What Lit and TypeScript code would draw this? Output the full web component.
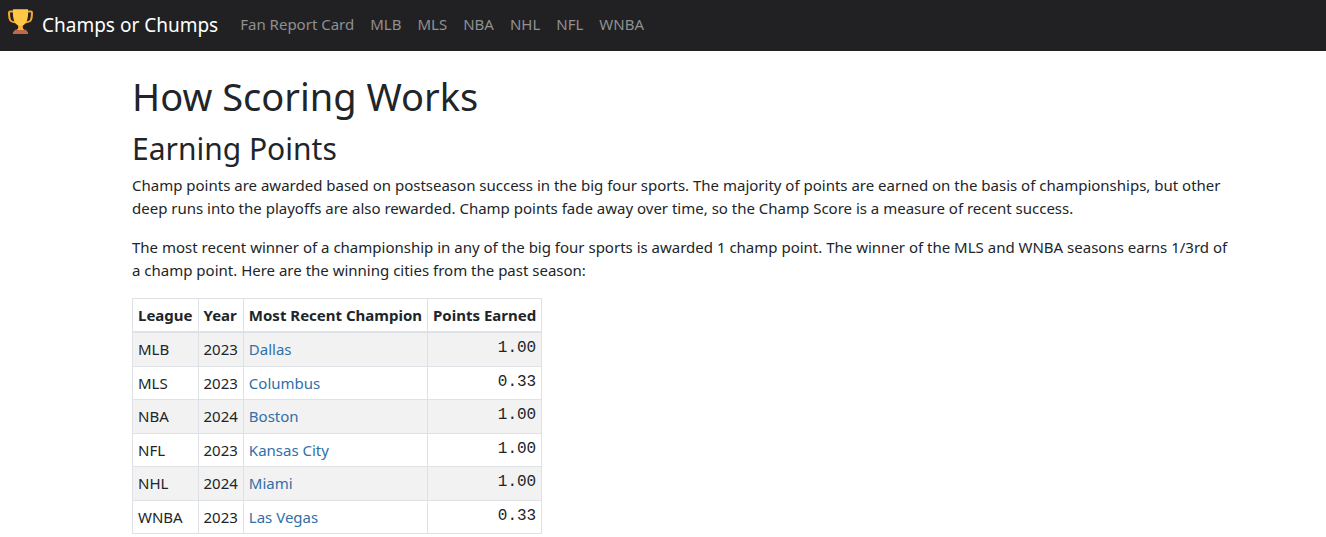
import { LitElement, html, css } from "lit";
import { customElement } from "lit/decorators.js";

interface Champion {
  league: string;
  year: number;
  city: string;
  points: number;
}

const LINKS = ["Fan Report Card", "MLB", "MLS", "NBA", "NHL", "NFL", "WNBA"];

const CHAMPIONS: Champion[] = [
  { league: "MLB", year: 2023, city: "Dallas", points: 1 },
  { league: "MLS", year: 2023, city: "Columbus", points: 0.33 },
  { league: "NBA", year: 2024, city: "Boston", points: 1 },
  { league: "NFL", year: 2023, city: "Kansas City", points: 1 },
  { league: "NHL", year: 2024, city: "Miami", points: 1 },
  { league: "WNBA", year: 2023, city: "Las Vegas", points: 0.33 },
];

@customElement("site-nav")
export class SiteNav extends LitElement {
  static styles = css`
    :host {
      display: block;
      background: #212123;
    }
    .bar {
      display: flex;
      align-items: center;
      padding: 7px 8px 9px;
      min-height: 35px;
    }
    .brand {
      display: flex;
      align-items: center;
      gap: 9px;
      margin-right: 14px;
      color: #fff;
      font-size: 19px;
      line-height: 30px;
      text-decoration: none;
      white-space: nowrap;
    }
    .trophy {
      width: 25px;
      height: 25px;
      margin-bottom: 6px;
    }
    .links {
      display: flex;
      flex-wrap: wrap;
      margin: 0;
      padding: 0;
      list-style: none;
    }
    .link {
      display: block;
      padding: 0 8px;
      color: #909091;
      line-height: 23px;
      text-decoration: none;
    }
    .link:hover {
      color: #bcbcbd;
    }
  `;

  render() {
    return html`
      <nav class="bar" aria-label="Main">
        <a class="brand" href="#">
          <svg class="trophy" viewBox="0 0 25 25" aria-hidden="true">
            <path d="M6 2.500H2.200Q1 2.500 1 3.800C1 7 1.400 9.800 2.300 11.300C3.200 12.700 5 13.300 8.500 13.500M19 2.500h3.800Q24 2.500 24 3.800C24 7 23.600 9.800 22.700 11.300C21.800 12.700 20 13.300 16.500 13.500" fill="none" stroke="#f6a52e" stroke-width="2" stroke-linejoin="round" />
            <path d="M5 .2h15c.3 4.800 0 9-1.300 12-1 2.300-2.600 3.700-4 4.600-.5 1.600 0 2.700 1.500 4.200v1H8.800v-1c1.500-1.500 2-2.600 1.500-4.200-1.400-.9-3-2.300-4-4.600C5 9.200 4.700 5 5 .2z" fill="#ffc744" />
            <path d="M10.400 16.800h4.200c-.4 1.700.1 2.700 1.600 4.200v.6H8.800V21c1.500-1.500 2-2.500 1.600-4.200z" fill="#f9b13a" />
            <path d="M7.500 20.500q5 1.200 10 0l1.800 2c.6.600.8 1.300.8 2.500H4.900c0-1.200.2-1.900.8-2.500z" fill="#bd6a4c" />
          </svg>
          <span>Champs or Chumps</span>
        </a>
        <ul class="links">
          ${LINKS.map((name) => html`<li><a class="link" href="#">${name}</a></li>`)}
        </ul>
      </nav>
    `;
  }
}

@customElement("champion-table")
export class ChampionTable extends LitElement {
  static styles = css`
    :host {
      display: block;
    }
    .table {
      border-collapse: collapse;
      font-size: 15px;
      line-height: 23px;
    }
    .table th,
    .table td {
      padding: 5px;
      border: 1px solid #dee2e6;
      text-align: left;
      vertical-align: top;
      white-space: nowrap;
    }
    .table thead th {
      padding-bottom: 4px;
      border-bottom-width: 2px;
    }
    .row:nth-child(odd) {
      background: #f2f2f2;
    }
    .row:nth-child(even) td {
      padding-bottom: 4px;
    }
    .table .points {
      font-family: "Liberation Mono", monospace;
      font-size: 16px;
      line-height: 20px;
      text-align: right;
    }
    .city {
      color: #306fa8;
      text-decoration: none;
    }
    .city:hover {
      text-decoration: underline;
    }
  `;

  render() {
    return html`
      <table class="table">
        <thead>
          <tr>
            <th scope="col">League</th>
            <th scope="col">Year</th>
            <th scope="col">Most Recent Champion</th>
            <th scope="col">Points Earned</th>
          </tr>
        </thead>
        <tbody>
          ${CHAMPIONS.map(
            (c) => html`
              <tr class="row">
                <td>${c.league}</td>
                <td>${c.year}</td>
                <td><a class="city" href="#">${c.city}</a></td>
                <td class="points">${c.points.toFixed(2)}</td>
              </tr>
            `
          )}
        </tbody>
      </table>
    `;
  }
}

@customElement("app-root")
export class AppRoot extends LitElement {
  static styles = css`
    :host {
      display: block;
      background: #fff;
      color: #212529;
      font-family: "Noto Sans", "Open Sans", sans-serif;
      font-size: 15px;
      line-height: 23px;
    }
    .content {
      box-sizing: border-box;
      max-width: 1140px;
      margin: 0 auto;
      padding: 22px 0 0 39px;
    }
    .title {
      margin: 0 0 11px;
      font-size: 38px;
      font-weight: 400;
      line-height: 46px;
    }
    .subtitle {
      margin: 0 0 6px;
      font-size: 30px;
      font-weight: 400;
      line-height: 38px;
    }
    .text {
      margin: 0 0 16px;
    }
  `;

  render() {
    return html`
      <site-nav></site-nav>
      <main class="content">
        <h1 class="title">How Scoring Works</h1>
        <h2 class="subtitle">Earning Points</h2>
        <p class="text">
          Champ points are awarded based on postseason success in the big four sports. The majority of points are
          earned on the basis of championships, but other deep runs into the playoffs are also rewarded. Champ points
          fade away over time, so the Champ Score is a measure of recent success.
        </p>
        <p class="text">
          The most recent winner of a championship in any of the big four sports is awarded 1 champ point. The winner
          of the MLS and WNBA seasons earns 1/3rd of a champ point. Here are the winning cities from the past season:
        </p>
        <champion-table></champion-table>
      </main>
    `;
  }
}
